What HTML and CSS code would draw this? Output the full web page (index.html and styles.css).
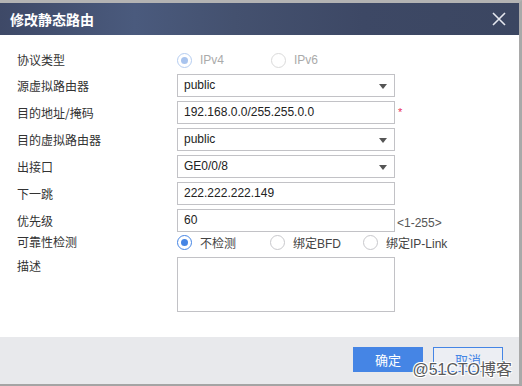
FILE: index.html
```html
<!DOCTYPE html>
<html lang="zh-CN">

<head>
    <meta charset="UTF-8">
    <title>修改静态路由</title>
    <link rel="stylesheet" href="styles.css">
</head>

<body>
    <div class="dialog">
        <div class="dialog-head">
            <span class="dialog-title">修改静态路由</span>
            <svg class="close" width="14" height="14" viewBox="0 0 14 14">
                <path d="M1 1 L13 13 M13 1 L1 13" stroke="#e4e7ee" stroke-width="1.6" fill="none" />
            </svg>
        </div>
        <div class="dialog-body">
            <div class="row row-radio">
                <label class="label">协议类型</label>
                <div class="radios">
                    <span class="opt disabled"><span class="radio checked"></span>IPv4</span>
                    <span class="opt disabled"><span class="radio"></span>IPv6</span>
                </div>
            </div>
            <div class="row">
                <label class="label">源虚拟路由器</label>
                <div class="select">public<span class="arrow"></span></div>
            </div>
            <div class="row">
                <label class="label">目的地址/掩码</label>
                <div class="input">192.168.0.0/255.255.0.0</div>
                <span class="required">*</span>
            </div>
            <div class="row">
                <label class="label">目的虚拟路由器</label>
                <div class="select">public<span class="arrow"></span></div>
            </div>
            <div class="row">
                <label class="label">出接口</label>
                <div class="select">GE0/0/8<span class="arrow"></span></div>
            </div>
            <div class="row">
                <label class="label">下一跳</label>
                <div class="input">222.222.222.149</div>
            </div>
            <div class="row row-prio">
                <label class="label">优先级</label>
                <div class="input">60</div>
                <span class="hint">&lt;1-255&gt;</span>
            </div>
            <div class="row row-radio">
                <label class="label">可靠性检测</label>
                <div class="radios">
                    <span class="opt"><span class="radio checked"></span>不检测</span>
                    <span class="opt"><span class="radio"></span>绑定BFD</span>
                    <span class="opt"><span class="radio"></span>绑定IP-Link</span>
                </div>
            </div>
            <div class="row row-desc">
                <label class="label">描述</label>
                <div class="textarea"></div>
            </div>
        </div>
        <div class="dialog-foot">
            <button class="btn btn-ok">确定</button>
            <button class="btn btn-cancel">取消</button>
            <span class="watermark">@51CTO博客</span>
        </div>
    </div>
</body>

</html>
```

FILE: styles.css
```css
* {
    margin: 0;
    padding: 0;
    box-sizing: border-box;
}

body {
    width: 522px;
    height: 386px;
    background: #fff;
    font-family: "Liberation Sans", "Noto Sans CJK SC", sans-serif;
    font-size: 12px;
    color: #333;
    overflow: hidden;
}

.dialog {
    position: relative;
    width: 522px;
    height: 386px;
    border-top: 3px solid #b3b3b3;
    border-right: 3px solid #a9a9a9;
    border-bottom: 2px solid #a4a4a4;
    display: flex;
    flex-direction: column;
}

.dialog-head {
    height: 32px;
    display: flex;
    align-items: center;
    justify-content: space-between;
    padding: 0 13px 0 10px;
    background: linear-gradient(90deg, #3e4967 0%, #4a5a7d 26%, #44516f 45%, #3d4865 70%, #3b4661 100%);
}

.dialog-title {
    color: #fff;
    font-size: 14px;
    font-weight: bold;
    font-family: "Noto Sans CJK SC", sans-serif;
}

.dialog-body {
    height: 302px;
    padding: 15px 0 0 17px;
}

.row {
    display: flex;
    align-items: center;
    height: 23px;
    margin-bottom: 4px;
}

.row-radio {
    height: 20px;
}

.row-prio {
    margin-top: 1px;
    margin-bottom: 0;
}

.row-desc {
    align-items: flex-start;
    height: 55px;
    margin-top: 5px;
}

.label {
    width: 160px;
    font-family: "Noto Sans CJK SC", sans-serif;
    color: #333;
    line-height: 18px;
}

.row-desc .label {
    line-height: 18px;
}

.select,
.input {
    position: relative;
    width: 218px;
    height: 23px;
    border: 1px solid #c2c2c6;
    padding-left: 6px;
    line-height: 21px;
    color: #222;
}

.arrow {
    position: absolute;
    right: 7px;
    top: 9px;
    border-left: 4px solid transparent;
    border-right: 4px solid transparent;
    border-top: 5px solid #555;
}

.textarea {
    width: 218px;
    height: 55px;
    border: 1px solid #c2c2c6;
}

.required {
    color: #e8305a;
    margin-left: 3px;
    font-size: 11px;
    line-height: 10px;
    align-self: flex-start;
    margin-top: 6px;
}

.hint {
    margin-left: 2px;
    color: #555;
    margin-top: 5px;
}

.radios {
    display: flex;
}

.opt {
    display: flex;
    align-items: center;
    width: 93px;
    font-family: "Liberation Sans", "Noto Sans CJK SC", sans-serif;
    color: #444;
}

.opt.disabled {
    width: 94px;
    color: #aaa;
}

.radio {
    position: relative;
    width: 15px;
    height: 15px;
    border: 1px solid #c8c8cc;
    border-radius: 50%;
    margin-right: 8px;
}

.radio.checked {
    border-color: #4585e5;
}

.radio.checked::after {
    content: "";
    position: absolute;
    left: 3px;
    top: 3px;
    width: 7px;
    height: 7px;
    border-radius: 50%;
    background: #4585e5;
}

.disabled .radio {
    border-color: #dadada;
}

.disabled .radio.checked {
    border-color: #b5cdf1;
}

.disabled .radio.checked::after {
    background: #a9c4ee;
}

.dialog-foot {
    position: relative;
    flex: 1;
    background: #e8e9ec;
    display: flex;
    justify-content: flex-end;
    align-items: flex-start;
    padding: 10px 16px 0 0;
    gap: 10px;
}

.btn {
    width: 70px;
    height: 25px;
    font-family: "Noto Sans CJK SC", sans-serif;
    font-size: 13px;
    border: 1px solid #4585e5;
    cursor: pointer;
}

.btn-ok {
    background: #4585e5;
    color: #fff;
}

.btn-cancel {
    background: #eceef3;
    color: #4585e5;
}

.watermark {
    position: absolute;
    right: 7px;
    top: 19px;
    font-family: "Liberation Sans", "Noto Sans CJK SC", sans-serif;
    font-size: 16px;
    color: #5a5a5a;
    text-shadow: 1px 1px 0 #fff, -1px -1px 0 #fff, 1px -1px 0 #fff, -1px 1px 0 #fff;
}
```
